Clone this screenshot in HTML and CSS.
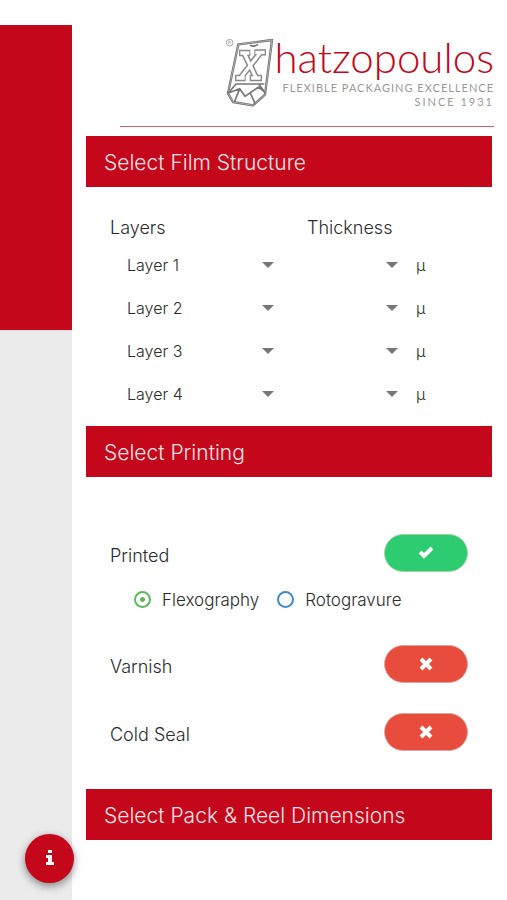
FILE: index.html
```html
<!DOCTYPE html>
<html lang="en">
<head>
<meta charset="utf-8">
<meta name="viewport" content="width=device-width, initial-scale=1">
<title>Hatzopoulos</title>
<link rel="stylesheet" href="styles.css">
</head>
<body>
<div class="page">
  <aside class="rail"><div class="rail-accent"></div></aside>
  <main class="main">
    <header class="brand">
      <svg class="emblem" viewBox="0 0 150 210" aria-hidden="true">
        <g fill="none" stroke-linejoin="round">
          <circle cx="14" cy="14" r="10" stroke="#aaa" stroke-width="3"/>
          <path d="M11 19V9h4a3 3 0 0 1 0 5h-4m4 0 4 5" stroke="#aaa" stroke-width="2"/>
          <path d="M40 19 141 6 120 170 84 202 24 192 9 166Z" stroke="#707070" stroke-width="7"/>
          <path d="M40 19 141 6 120 170 84 202 24 192 9 166Z" stroke="#c9c9c9" stroke-width="2"/>
          <path d="M75 22q12 6 24-3" stroke="#777" stroke-width="5"/>
          <path d="M42 45H76M88 43H123M30 120H62M74 120H111M58 46 93 119M106 44 47 119" stroke="#888" stroke-width="19"/>
          <path d="M46 45H73M91 43H119M34 120H59M78 120H107M58 46 93 119M106 44 47 119" stroke="#fff" stroke-width="10"/>
          <path d="M31 138H118M10 165 33 138M101 138 121 165M10 165 44 152 60 175 101 147 121 165M44 152 29 190M76 165 90 196" stroke="#777" stroke-width="5"/>
        </g>
      </svg>
      <div class="brand-text">
        <span class="brand-name">hatzopoulos</span>
        <span class="brand-tag">FLEXIBLE PACKAGING EXCELLENCE</span>
        <span class="brand-since">SINCE 1931</span>
      </div>
    </header>

    <section>
      <h2 class="bar">Select Film Structure</h2>
      <div class="layers">
        <h3 class="layers-head">Layers</h3>
        <h3 class="layers-head">Thickness</h3>

        <label class="layer-name" for="film1">Layer 1</label>
        <span class="pick pick-film"><select id="film1"><option></option></select></span>
        <span class="pick"><select id="thick1" aria-label="Layer 1 thickness"><option></option></select></span>
        <label class="unit" for="thick1">μ</label>

        <label class="layer-name" for="film2">Layer 2</label>
        <span class="pick pick-film"><select id="film2"><option></option></select></span>
        <span class="pick"><select id="thick2" aria-label="Layer 2 thickness"><option></option></select></span>
        <label class="unit" for="thick2">μ</label>

        <label class="layer-name" for="film3">Layer 3</label>
        <span class="pick pick-film"><select id="film3"><option></option></select></span>
        <span class="pick"><select id="thick3" aria-label="Layer 3 thickness"><option></option></select></span>
        <label class="unit" for="thick3">μ</label>

        <label class="layer-name" for="film4">Layer 4</label>
        <span class="pick pick-film"><select id="film4"><option></option></select></span>
        <span class="pick"><select id="thick4" aria-label="Layer 4 thickness"><option></option></select></span>
        <label class="unit" for="thick4">μ</label>
      </div>
    </section>

    <section>
      <h2 class="bar">Select Printing</h2>
      <div class="printing">
        <div class="option">
          <span class="option-name" id="printed">Printed</span>
          <button class="toggle toggle-on" type="button" aria-labelledby="printed" aria-pressed="true">
            <svg width="16" height="14" viewBox="0 0 16 14" aria-hidden="true"><path d="M2 6 6 10 14 2" fill="none" stroke="#fff" stroke-width="4"/></svg>
          </button>
        </div>
        <div class="methods">
          <label class="method"><input class="radio" type="radio" name="method" checked>Flexography</label>
          <label class="method"><input class="radio" type="radio" name="method">Rotogravure</label>
        </div>
        <div class="option">
          <span class="option-name" id="varnish">Varnish</span>
          <button class="toggle" type="button" aria-labelledby="varnish" aria-pressed="false">
            <svg width="14" height="14" viewBox="0 0 14 14" aria-hidden="true"><path d="M2 2 12 12M12 2 2 12" stroke="#fff" stroke-width="4"/></svg>
          </button>
        </div>
        <div class="option">
          <span class="option-name" id="coldseal">Cold Seal</span>
          <button class="toggle" type="button" aria-labelledby="coldseal" aria-pressed="false">
            <svg width="14" height="14" viewBox="0 0 14 14" aria-hidden="true"><path d="M2 2 12 12M12 2 2 12" stroke="#fff" stroke-width="4"/></svg>
          </button>
        </div>
      </div>
    </section>

    <section>
      <h2 class="bar">Select Pack &amp; Reel Dimensions</h2>
    </section>
  </main>
</div>
<button class="info" type="button" aria-label="Information">
  <svg width="8" height="15" viewBox="0 0 8 15" aria-hidden="true"><path d="M2 0h4v3H2zM0 5h6v7h2v3H0v-3h2V8H0z" fill="#fff"/></svg>
</button>
</body>
</html>
```

FILE: styles.css
```css
* {
  box-sizing: border-box;
}

body {
  margin: 0;
  background: #fff;
  color: #2b2b2b;
  font: 300 18px/24px Inter, "Liberation Sans", sans-serif;
}

h2,
h3 {
  margin: 0;
  font-weight: 300;
}

.page {
  display: grid;
  grid-template-columns: 72px 1fr;
  min-height: 100vh;
  padding-top: 25px;
}

.rail {
  background: #ebebeb;
}

.rail-accent {
  height: 306px;
  background: #c4071b;
  border-bottom: 1px solid #f6dfe1;
}

.main {
  padding: 0 15px 0 14px;
}

.brand {
  display: flex;
  justify-content: flex-end;
  height: 102px;
  margin: 0 -2px 9px 34px;
  padding-top: 13px;
  border-bottom: 1px solid #d4626d;
}

.emblem {
  width: 50px;
  height: 70px;
}

.brand-text {
  display: flex;
  flex-direction: column;
  align-items: flex-end;
  color: #999;
  font-family: Lato, sans-serif;
  font-weight: 400;
  white-space: nowrap;
}

.brand-name {
  margin-bottom: 5px;
  color: #c4071b;
  font-size: 42px;
  font-weight: 300;
  line-height: 38px;
}

.brand-tag,
.brand-since {
  font-size: 11px;
  line-height: 14px;
  letter-spacing: 1px;
}

.brand-since {
  letter-spacing: 2px;
}

.bar {
  padding: 15px 18px 12px;
  background: #c4071b;
  color: #fde3e5;
  font-size: 21px;
  line-height: 24px;
}

.layers {
  display: grid;
  grid-template-columns: 106fr 91fr 94fr 67fr;
  align-items: center;
  padding: 29px 24px 11px;
  grid-auto-rows: 43px;
  grid-template-rows: 27px;
}

.layers-head {
  grid-column: span 2;
  align-self: start;
  font-size: 18px;
}

.layer-name {
  padding-left: 17px;
  font-size: 16px;
}

.pick {
  display: flex;
  position: relative;
}

.pick-film {
  margin-right: 30px;
}

.pick select {
  width: 100%;
  height: 30px;
  border: 0;
  background: transparent;
  appearance: none;
}

.pick::after {
  content: "";
  position: absolute;
  top: 12px;
  right: 3px;
  border: 6px solid transparent;
  border-top-color: #777;
  border-bottom: 0;
  pointer-events: none;
}

.unit {
  padding-left: 15px;
  font-size: 16px;
}

.printing {
  padding: 57px 24px 38px;
}

.option {
  display: flex;
  align-items: center;
  justify-content: space-between;
}

.option + .option {
  margin-top: 30px;
}

.option-name {
  padding-top: 5px;
}

.toggle {
  display: flex;
  align-items: center;
  justify-content: center;
  width: 84px;
  height: 38px;
  padding: 0;
  border: 1px solid #d9a49c;
  border-radius: 19px;
  background: #e74c3c;
}

.toggle-on {
  border-color: #9fd3a6;
  background: #2ecc71;
}

.methods {
  display: flex;
  gap: 18px;
  margin: 15px 0 33px;
  padding-left: 24px;
}

.method {
  display: flex;
  align-items: center;
  gap: 11px;
  height: 25px;
  font-size: 17px;
}

.radio {
  width: 17px;
  height: 17px;
  margin: 0;
  border: 2px solid #428bca;
  border-radius: 50%;
  appearance: none;
}

.radio:checked {
  border-color: #5cb85c;
  background: radial-gradient(circle, #5cb85c 2px, transparent 3px);
}

.info {
  display: flex;
  position: fixed;
  bottom: 17px;
  left: 25px;
  align-items: center;
  justify-content: center;
  width: 49px;
  height: 49px;
  padding: 0 0 3px;
  border: 0;
  border-radius: 50%;
  background: #c4071b;
  box-shadow: 0 3px 8px rgba(0, 0, 0, 0.45);
}
```
